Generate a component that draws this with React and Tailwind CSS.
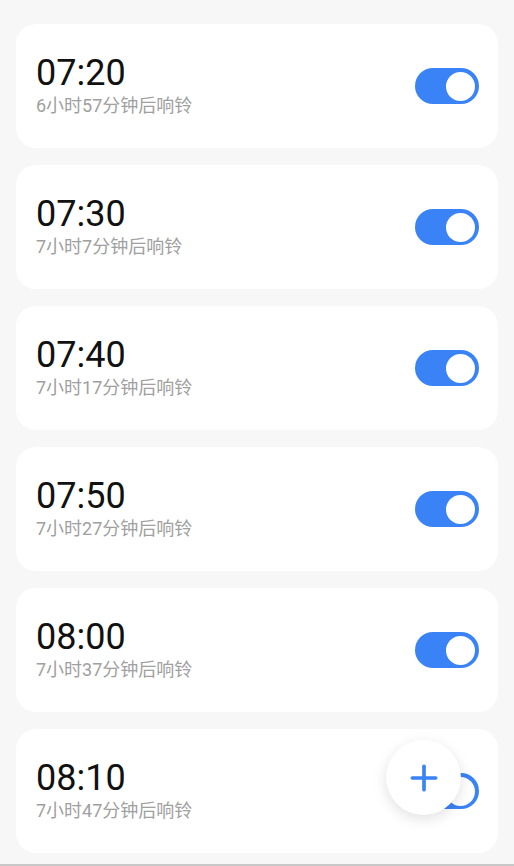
import { Plus } from 'lucide-react'

const alarms = [
  { time: '07:20', hint: '6小时57分钟后响铃' },
  { time: '07:30', hint: '7小时7分钟后响铃' },
  { time: '07:40', hint: '7小时17分钟后响铃' },
  { time: '07:50', hint: '7小时27分钟后响铃' },
  { time: '08:00', hint: '7小时37分钟后响铃' },
  { time: '08:10', hint: '7小时47分钟后响铃' },
]

const Toggle = () => (
  <div className="w-[64px] h-[36px] rounded-full bg-[#3a83f6] flex items-center justify-end pr-[4px]">
    <div className="w-[29px] h-[29px] rounded-full bg-white" />
  </div>
)

export default function App() {
  return (
    <div
      className="relative w-[514px] h-[866px] bg-[#f7f7f7] overflow-hidden"
      style={{ fontFamily: 'Roboto, "Noto Sans CJK SC", sans-serif' }}
    >
      <div className="flex flex-col gap-[17px] px-4 pt-6">
        {alarms.map((a) => (
          <div
            key={a.time}
            className="h-[124px] rounded-[20px] bg-white flex items-center justify-between pl-[20px] pr-[19px]"
          >
            <div className="flex flex-col pb-[2px]">
              <span className="text-[36px] leading-[36px] text-[#111]">{a.time}</span>
              <span className="mt-[4px] text-[18px] leading-[21px] text-[#a0a0a0]">{a.hint}</span>
            </div>
            <Toggle />
          </div>
        ))}
      </div>
      <div className="absolute left-0 right-0 bottom-0 h-[2px] bg-[#c8c8c8]" />

      {/* add button */}
      <button className="absolute left-[386px] top-[740px] w-[75px] h-[75px] rounded-full bg-white shadow-[0_4px_14px_rgba(0,0,0,0.12)] flex items-center justify-center">
        <Plus className="w-[40px] h-[40px] text-[#3a83f6]" strokeWidth={2.2} />
      </button>
    </div>
  )
}
